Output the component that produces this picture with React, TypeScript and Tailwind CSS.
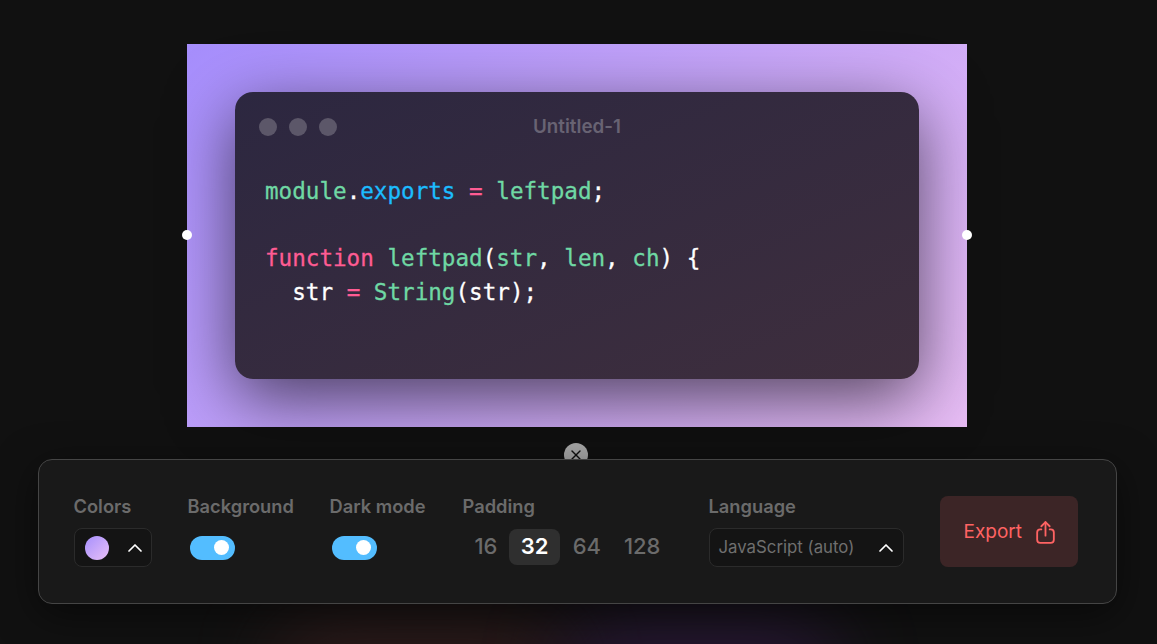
import { ChevronUp, X } from 'lucide-react';
import type { ReactNode } from 'react';

const sans = 'font-[Inter,sans-serif]';

function Toggle() {
  return (
    <div className="mx-[2px] flex h-[24px] w-[45px] items-center justify-end rounded-full bg-[#53bdff] pr-[6px]">
      <div className="h-[15px] w-[15px] rounded-full bg-white" />
    </div>
  );
}

function Field({ label, className, children }: { label: string; className: string; children: ReactNode }) {
  return (
    <div className={`flex h-[71px] flex-col justify-between ${className}`}>
      <span className="text-[18.3px] leading-[20px] font-semibold whitespace-nowrap text-[#6b6b6b]">{label}</span>
      {children}
    </div>
  );
}

function ShareIcon() {
  return (
    <svg width="25" height="25" viewBox="0 0 24 24" fill="none" stroke="currentColor" strokeWidth="1.75" strokeLinecap="round" strokeLinejoin="round">
      <path d="M8 9H7a3 3 0 0 0-3 3v7a3 3 0 0 0 3 3h10a3 3 0 0 0 3-3v-7a3 3 0 0 0-3-3h-1" />
      <path d="M12 15V2" />
      <path d="m8 6 4-4 4 4" />
    </svg>
  );
}

const G = ({ children }: { children: ReactNode }) => <span className="text-[#6fd8a4]">{children}</span>;
const P = ({ children }: { children: ReactNode }) => <span className="text-[#ff5c93]">{children}</span>;

export default function App() {
  return (
    <div className={`relative flex h-[644px] w-full flex-col items-center overflow-hidden bg-[#111111] pt-[44px] pr-[3px] ${sans}`}>
      <div className="absolute bottom-[-85px] left-[270px] h-[110px] w-[300px] rounded-full bg-[#5a2a2a] opacity-40 blur-[40px]" />
      <div className="absolute bottom-[-85px] left-[560px] h-[110px] w-[280px] rounded-full bg-[#3f1f5a] opacity-50 blur-[40px]" />

      <div className="relative h-[383px] w-[780px] bg-[linear-gradient(135deg,#a68efd,#e8bdf5)] p-[48px]">
        <div className="absolute top-[186px] left-[-5px] h-[10px] w-[10px] rounded-full bg-white" />
        <div className="absolute top-[186px] right-[-5px] h-[10px] w-[10px] rounded-full bg-white" />

        <div className="h-[287px] rounded-[18px] bg-gradient-to-br from-[#2c2740] to-[#3e2e3d] shadow-[0_20px_68px_rgba(0,0,0,0.62)]">
          <div className="relative flex h-[70px] items-center gap-[12px] pl-[24px]">
            <div className="h-[18px] w-[18px] rounded-full bg-[#5c5769]" />
            <div className="h-[18px] w-[18px] rounded-full bg-[#5c5769]" />
            <div className="h-[18px] w-[18px] rounded-full bg-[#5c5769]" />
            <span className="absolute inset-x-0 text-center text-[18.8px] font-semibold text-[#686373]">Untitled-1</span>
          </div>
          <pre className="mt-[13px] pl-[30px] font-['DejaVu_Sans_Mono',monospace] text-[22.6px] leading-[33.6px] text-white [-webkit-text-stroke:0.3px]">
            <G>module</G>.<span className="text-[#1cbcff]">exports</span> <P>=</P> <G>leftpad</G>;{'\n\n'}
            <P>function</P> <G>leftpad</G>(<G>str</G>, <G>len</G>, <G>ch</G>) {'{'}{'\n'}
            {'  '}str <P>=</P> <G>String</G>(str);
          </pre>
        </div>
      </div>

      <div className="absolute top-[443px] left-[564px] flex h-[24px] w-[24px] items-start justify-center rounded-full bg-[#a8a8a8] pt-[4px] text-[#111111]">
        <X size={16} strokeWidth={2} />
      </div>

      <div className="relative mt-[32px] flex h-[145px] w-[1079px] items-center gap-[36px] rounded-[14px] border border-[#454545] bg-[#191919] px-[35px] shadow-[0_10px_40px_rgba(0,0,0,0.5)]">
        <Field label="Colors" className="w-[78px]">
          <div className="flex h-[39px] w-[78px] items-center justify-between rounded-[8px] border border-[#2b2b2b] bg-[#141414] pr-[4px] pl-[10px]">
            <div className="h-[24px] w-[24px] rounded-full bg-gradient-to-br from-[#a78ffc] to-[#e9bff6]" />
            <ChevronUp size={24} strokeWidth={1.75} className="text-white" />
          </div>
        </Field>
        <Field label="Background" className="w-[106px]">
          <div className="flex h-[39px] items-center"><Toggle /></div>
        </Field>
        <Field label="Dark mode" className="w-[97px]">
          <div className="flex h-[39px] items-center"><Toggle /></div>
        </Field>
        <Field label="Padding" className="w-[210px]">
          <div className="flex h-[39px] w-[210px] items-center justify-between pb-[2px] text-[22px] font-medium text-[#6b6b6b]">
            <span className="flex h-[36px] w-[47px] items-center justify-center">16</span>
            <span className="flex h-[36px] w-[51px] items-center justify-center rounded-[8px] bg-[#2f2f2f] font-semibold text-white">32</span>
            <span className="ml-[2px] flex h-[36px] w-[50px] items-center justify-center">64</span>
            <span className="flex h-[36px] w-[61px] items-center justify-center">128</span>
          </div>
        </Field>
        <Field label="Language" className="w-[195px]">
          <div className="flex h-[39px] w-[195px] items-center justify-between rounded-[8px] border border-[#2b2b2b] bg-[#141414] pr-[5px] pl-[9px] text-[16.8px] text-[#6f6f6f]">
            <span>JavaScript (auto)</span>
            <ChevronUp size={24} strokeWidth={1.75} className="text-white" />
          </div>
        </Field>
        <div className="flex h-[71px] w-[138px] items-center gap-[11px] rounded-[8px] bg-[#3c2526] pt-[1px] pl-[24px] text-[19px] text-[#ff6363]">
          <span>Export</span>
          <ShareIcon />
        </div>
      </div>
    </div>
  );
}
